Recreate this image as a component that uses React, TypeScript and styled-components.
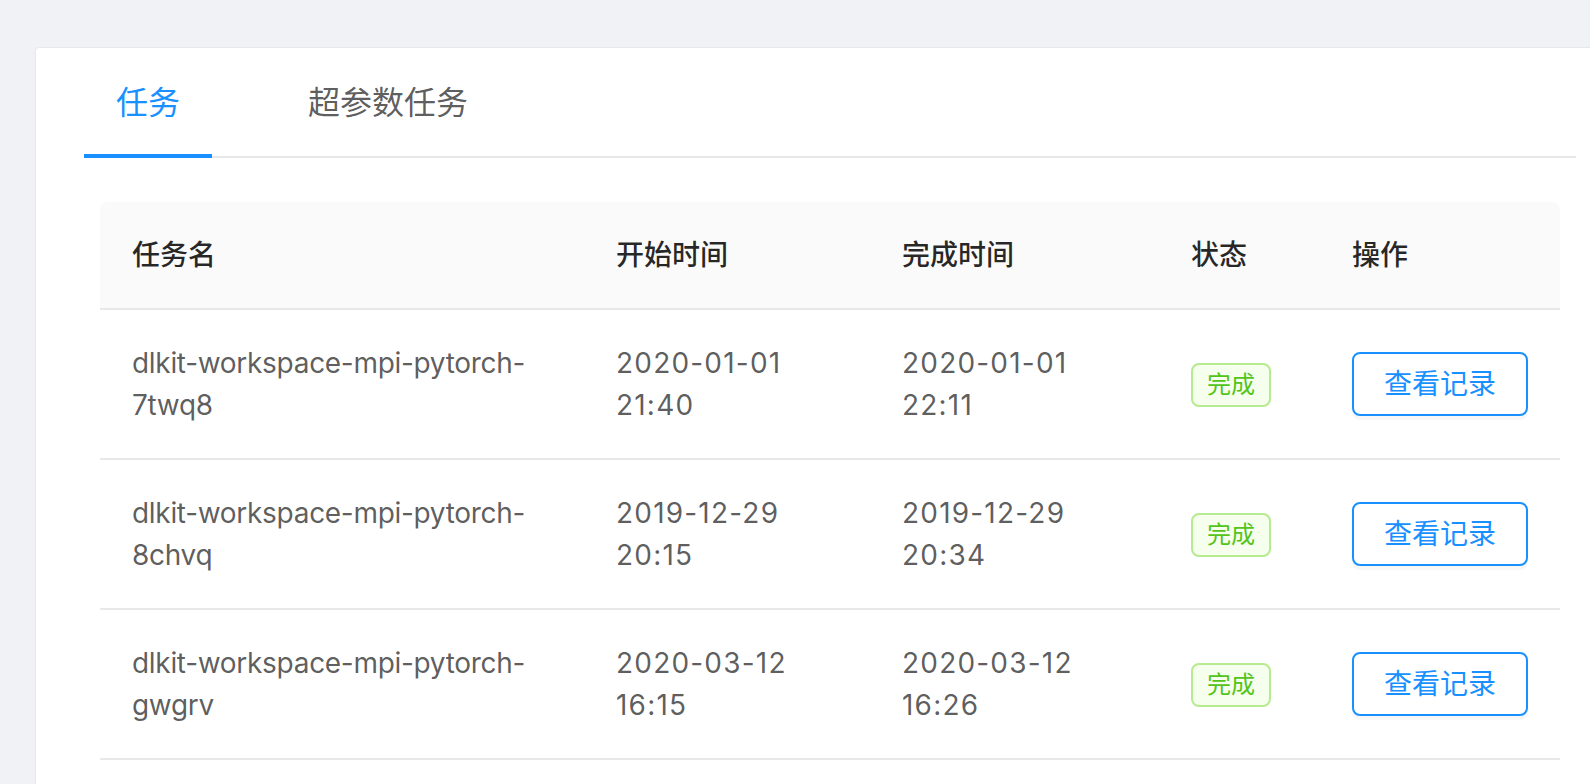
import React, { FC } from "react";
import styled, { createGlobalStyle } from "styled-components";

const GlobalStyle = createGlobalStyle`
  html, body {
    margin: 0;
    padding: 0;
    overflow: hidden;
    background: #f0f2f5;
  }
  body {
    font-family: Inter, "Noto Sans CJK SC", sans-serif;
    -webkit-font-smoothing: antialiased;
  }
`;

type Job = {
  name: string;
  start: string;
  end: string;
  status: string;
};

const jobs: Job[] = [
  {
    name: "dlkit-workspace-mpi-pytorch-7twq8",
    start: "2020-01-01 21:40",
    end: "2020-01-01 22:11",
    status: "完成",
  },
  {
    name: "dlkit-workspace-mpi-pytorch-8chvq",
    start: "2019-12-29 20:15",
    end: "2019-12-29 20:34",
    status: "完成",
  },
  {
    name: "dlkit-workspace-mpi-pytorch-gwgrv",
    start: "2020-03-12 16:15",
    end: "2020-03-12 16:26",
    status: "完成",
  },
];

const tabs = ["任务", "超参数任务"];

const App: FC = () => {
  return (
    <Page>
      <GlobalStyle />
      <Card>
        <TabBar>
          {tabs.map((t, i) => (
            <Tab key={t} active={i === 0}>
              {t}
            </Tab>
          ))}
        </TabBar>
        <Table>
          <HeadRow>
            <HeadCell>任务名</HeadCell>
            <HeadCell>开始时间</HeadCell>
            <HeadCell>完成时间</HeadCell>
            <HeadCell>状态</HeadCell>
            <HeadCell>操作</HeadCell>
          </HeadRow>
          {jobs.map((job) => (
            <BodyRow key={job.name}>
              <Cell spacing={-0.3}>{job.name}</Cell>
              <Cell spacing={1.2}>{job.start}</Cell>
              <Cell spacing={1.2}>{job.end}</Cell>
              <Cell>
                <Tag>{job.status}</Tag>
              </Cell>
              <Cell>
                <Button>查看记录</Button>
              </Cell>
            </BodyRow>
          ))}
        </Table>
      </Card>
    </Page>
  );
};

export default App;

const Page = styled.div`
  padding: 47px 0 0 35px;
  min-height: 100vh;
  box-sizing: border-box;
`;

const Card = styled.div`
  width: 1590px;
  min-height: 800px;
  box-sizing: border-box;
  background: #fff;
  border: 1px solid #e6e8eb;
  border-radius: 4px;
  padding: 7px 48px 0;
`;

const TabBar = styled.div`
  display: flex;
  border-bottom: 2px solid #e8e8e8;
  margin-bottom: 44px;
`;

const Tab = styled.div<{ active?: boolean }>`
  padding: 24px 32px 27px;
  margin-right: 64px;
  margin-bottom: -2px;
  font-size: 32px;
  line-height: 48px;
  color: ${({ active }) => (active ? "#1890ff" : "rgba(0, 0, 0, 0.65)")};
  border-bottom: 4px solid
    ${({ active }) => (active ? "#1890ff" : "transparent")};
  cursor: pointer;
`;

const Table = styled.div`
  margin: 0 16px;
`;

const columns = "484px 286px 289px 161px 1fr";

const HeadRow = styled.div`
  display: grid;
  grid-template-columns: ${columns};
  background: #fafafa;
  border-radius: 8px 8px 0 0;
  border-bottom: 2px solid #e8e8e8;
`;

const HeadCell = styled.div`
  padding: 32px;
  font-size: 28px;
  line-height: 42px;
  font-weight: 500;
  color: rgba(0, 0, 0, 0.85);
`;

const BodyRow = styled.div`
  display: grid;
  grid-template-columns: ${columns};
  align-items: center;
  border-bottom: 2px solid #e8e8e8;
`;

const Cell = styled.div<{ spacing?: number }>`
  padding: 32px;
  font-size: 28px;
  line-height: 42px;
  letter-spacing: ${({ spacing = 0 }) => spacing}px;
  color: rgba(0, 0, 0, 0.65);
`;

const Tag = styled.span`
  display: inline-block;
  height: 44px;
  box-sizing: border-box;
  padding: 0 14px;
  font-size: 24px;
  line-height: 40px;
  letter-spacing: 0;
  color: #52c41a;
  background: #f6ffed;
  border: 2px solid #b7eb8f;
  border-radius: 8px;
  vertical-align: middle;
`;

const Button = styled.button`
  height: 64px;
  padding: 0 30px;
  font-family: inherit;
  font-size: 28px;
  line-height: 60px;
  color: #1890ff;
  background: #fff;
  border: 2px solid #1890ff;
  border-radius: 8px;
  box-shadow: 0 4px 0 rgba(0, 0, 0, 0.03);
  cursor: pointer;
  vertical-align: middle;
`;
